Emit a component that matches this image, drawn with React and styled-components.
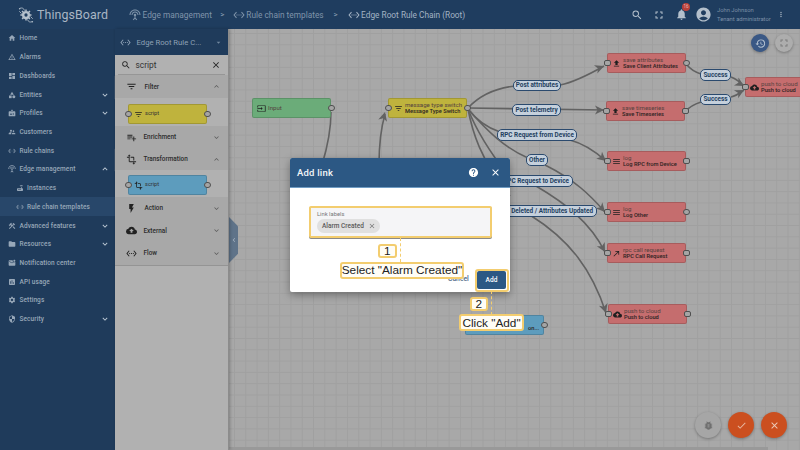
import React from "react";
import styled, { createGlobalStyle } from "styled-components";
import {
  MdHome, MdOutlineWarningAmber, MdDashboard, MdCategory, MdBadge, MdSupervisorAccount, MdSettingsEthernet,
  MdSettingsInputAntenna, MdRouter, MdConstruction, MdFolder, MdMarkEmailUnread, MdInsertChart, MdSettings,
  MdSecurity, MdExpandMore, MdExpandLess, MdSearch, MdFullscreen, MdNotifications, MdAccountCircle, MdMoreVert,
  MdArrowDropDown, MdClose, MdFilterList, MdPlaylistAdd, MdTransform, MdFlashOn, MdCloudUpload, MdInput,
  MdFileUpload, MdMenu, MdCallMade, MdBugReport, MdCheck, MdHistory, MdHelp, MdChevronLeft,
} from "react-icons/md";

const Global = createGlobalStyle`
  html, body { margin: 0; padding: 0; width: 800px; height: 450px; overflow: hidden; }
  body { font-family: Roboto, "Liberation Sans", sans-serif; }
  * { box-sizing: border-box; }
`;

const Page = styled.div`
  position: relative;
  width: 800px;
  height: 450px;
  overflow: hidden;
  display: flex;
  flex-direction: column;
  background: #1f3b5b;
`;

/* Header */
const Header = styled.header`
  height: 29px;
  flex: none;
  display: flex;
  align-items: center;
  background: #1f3d5f;
  color: #8ea1b5;
`;
const Brand = styled.div`
  width: 129px;
  flex: none;
  padding-left: 17px;
  display: flex;
  align-items: center;
  gap: 2px;
  color: #a9b6c4;
  font-size: 12.4px;
  letter-spacing: 0.1px;
`;
const Crumbs = styled.nav`
  display: flex;
  align-items: center;
  flex: 1;
  min-width: 0;
  font-size: 8.3px;
  white-space: nowrap;
`;
const Crumb = styled.span`
  display: flex;
  align-items: center;
  gap: 1.5px;
  color: ${(p) => (p.$current ? "#a3b3c4" : "#7f94aa")};
  svg { font-size: 12px; flex: none; }
`;
const Sep = styled.span`
  width: ${(p) => p.$w}px;
  text-align: center;
  font-size: 8px;
  color: #8ea1b5;
`;
const Tools = styled.div`
  width: 174px;
  flex: none;
  display: flex;
  align-items: center;
  padding-right: 15px;
  color: #b4c0cc;
`;
const ToolIcon = styled.span`
  position: relative;
  display: flex;
  flex: none;
  width: ${(p) => p.$w || 22}px;
  justify-content: center;
  font-size: ${(p) => p.$size || 12}px;
`;
const Badge = styled.i`
  position: absolute;
  top: -5px;
  left: 12px;
  width: 8px;
  height: 8px;
  border-radius: 50%;
  background: #b9403a;
  color: #e9b7b5;
  font: normal 4.5px/8px Roboto, sans-serif;
  text-align: center;
`;
const User = styled.div`
  display: flex;
  flex-direction: column;
  gap: 2px;
  width: 60px;
  margin-left: 3px;
  font-size: 5.8px;
  line-height: 7px;
  color: #7c90a6;
  white-space: nowrap;
`;

/* Body */
const Body = styled.div`
  flex: 1;
  display: flex;
  min-height: 0;
`;
const Sidebar = styled.aside`
  width: 114.5px;
  flex: none;
  background: #1f3b5b;
`;
const NavItem = styled.div`
  height: 18.72px;
  display: flex;
  align-items: center;
  padding-left: ${(p) => (p.$sub ? 15.5 : 7.5)}px;
  gap: ${(p) => (p.$sub ? 3.5 : 4)}px;
  background: ${(p) => (p.$active ? "#28476a" : "transparent")};
  color: #97a7b8;
  font-size: 6.5px;
  font-weight: 500;
  letter-spacing: 0.1px;
  white-space: nowrap;
  > svg:first-child { font-size: 8px; flex: none; }
`;
const NavChevron = styled.span`
  margin-left: auto;
  margin-right: 5px;
  display: flex;
  font-size: 10px;
  color: #c0ccd8;
`;

const Palette = styled.section`
  width: 114.5px;
  flex: none;
  display: flex;
  flex-direction: column;
  background: #b1b1b1;
  border-right: 1px solid #8c8c8c;
  box-shadow: 1px 0 3px rgba(0, 0, 0, 0.25);
  z-index: 1;
`;
const ChainSelect = styled.div`
  height: 26px;
  flex: none;
  display: flex;
  align-items: center;
  padding-left: 5px;
  gap: 6px;
  background: #1f3b5b;
  color: #8ea1b5;
  font-size: 7.7px;
  white-space: nowrap;
  > svg:first-child { font-size: 11px; flex: none; }
`;
const Caret = styled.span`
  margin-left: auto;
  margin-right: 5px;
  display: flex;
  font-size: 9px;
  color: #71879e;
`;
const SearchBox = styled.div`
  height: 20px;
  flex: none;
  margin: 0 3px;
  display: flex;
  align-items: center;
  padding: 0 4px 0 3px;
  gap: 5px;
  border-bottom: 1px solid #969696;
  color: #333;
  font-size: 8.4px;
  svg { font-size: 10px; flex: none; color: #222; }
`;
const Spacer = styled.span`
  margin-left: auto;
  display: flex;
`;
const Section = styled.div`
  height: ${(p) => p.$h}px;
  flex: none;
  display: flex;
  align-items: center;
  padding-left: 11px;
  gap: ${(p) => p.$gap || 5}px;
  background: #a8a8a8;
  color: #2c2c2c;
  font-size: 6.4px;
  font-weight: 500;
  box-shadow: ${(p) => (p.$open ? "0 1px 1px #999" : "none")};
  > svg:first-child { font-size: 11px; flex: none; color: #222; }
`;
const SectionChevron = styled.span`
  margin-left: auto;
  margin-right: 7px;
  display: flex;
  font-size: 9px;
  color: #5b5b5b;
`;
const SectionBody = styled.div`
  height: ${(p) => p.$h}px;
  flex: none;
  padding: ${(p) => p.$top}px 0 0 13.5px;
  background: #b1b1b1;
`;
const PaletteEnd = styled.div`
  height: 1px;
  flex: none;
  background: #949494;
`;

/* Nodes */
const colors = { red: "#c56d6e", yellow: "#bfb33d", blue: "#5d9cbd", green: "#6bac79" };
const NodeBox = styled.div`
  position: absolute;
  left: ${(p) => p.$x - 229}px;
  top: ${(p) => p.$y - 29}px;
  width: ${(p) => p.$w || 79}px;
  height: 20px;
  display: flex;
  align-items: center;
  padding-left: ${(p) => p.$pad || 4}px;
  gap: 2px;
  background: ${(p) => colors[p.$c]};
  border: 0.5px solid rgba(0, 0, 0, 0.15);
  border-radius: 2px;
  color: #333;
  font-size: 5.6px;
  line-height: 7.2px;
  white-space: nowrap;
  > svg { font-size: 9px; flex: none; color: #1f1f1f; }
`;
const NodeText = styled.div`
  display: flex;
  flex-direction: column;
  color: #55423f;
  font-size: 6.1px;
  b { font-weight: 500; font-size: 5.7px; color: #2b2222; }
`;
const Port = styled.i`
  position: absolute;
  top: 50%;
  ${(p) => (p.$in ? "left: -4px" : "right: -4.5px")};
  width: 6.5px;
  height: 6.5px;
  margin-top: -3.3px;
  border-radius: ${(p) => (p.$round ? "50%" : "2px")};
  background: #a5a5a5;
  border: 0.7px solid #4f4f4f;
`;
const PaletteItem = styled(NodeBox)`
  position: relative;
  left: 0;
  top: 0;
  padding-left: 5px;
`;
const Canvas = styled.main`
  position: relative;
  flex: 1;
  min-width: 0;
  background-color: #a8a8a8;
  background-image:
    linear-gradient(#a0a0a0 0.6px, transparent 0.6px),
    linear-gradient(90deg, #a0a0a0 0.6px, transparent 0.6px);
  background-size: 11.3px 11.3px;
  background-position: 5px 4px;
`;
const Wires = styled.svg`
  position: absolute;
  inset: 0;
`;
const EdgeLabel = styled.div`
  position: absolute;
  left: ${(p) => p.$x - 229}px;
  top: ${(p) => p.$y - 29}px;
  width: ${(p) => p.$w}px;
  height: 11.5px;
  display: flex;
  align-items: center;
  justify-content: ${(p) => (p.$end ? "flex-end" : "center")};
  padding-right: ${(p) => (p.$end ? 3 : 0)}px;
  background: #c5d0dc;
  border: 1px solid #2b4a6e;
  border-radius: 5px;
  color: #23405f;
  font-size: 6.4px;
  font-weight: 700;
  white-space: nowrap;
  overflow: hidden;
`;
const CollapseTab = styled.div`
  position: absolute;
  left: 0;
  top: 188px;
  width: 9px;
  height: 46px;
  display: flex;
  align-items: center;
  justify-content: center;
  color: #a9b6c4;
  font-size: 8px;
  background: #5f7389;
  clip-path: polygon(0 0, 100% 20%, 100% 80%, 0 100%);
`;
const Round = styled.div`
  position: absolute;
  left: ${(p) => p.$x - 229 - p.$d / 2}px;
  top: ${(p) => p.$y - 29 - p.$d / 2}px;
  width: ${(p) => p.$d}px;
  height: ${(p) => p.$d}px;
  display: flex;
  align-items: center;
  justify-content: center;
  border-radius: 50%;
  background: ${(p) => p.$bg};
  color: ${(p) => p.$fg};
  font-size: ${(p) => p.$icon}px;
  box-shadow: 0 1px 3px rgba(0, 0, 0, 0.3);
`;
const Scrollbar = styled.div`
  position: absolute;
  left: 0;
  bottom: 0;
  width: 539px;
  height: 3px;
  background: #999;
`;

/* Dialog */
const Dialog = styled.div`
  position: absolute;
  left: 290px;
  top: 158px;
  width: 220px;
  height: 134px;
  display: flex;
  flex-direction: column;
  background: #fff;
  border-radius: 2px;
  box-shadow: 0 3px 8px rgba(0, 0, 0, 0.35);
  z-index: 3;
`;
const DialogHead = styled.div`
  height: 30px;
  flex: none;
  display: flex;
  align-items: center;
  padding: 0 9px 0 7px;
  background: #2c5884;
  border-bottom: 1px solid #6f9cc4;
  border-radius: 2px 2px 0 0;
  color: #f2f5f8;
  font-size: 9.5px;
  font-weight: 500;
  letter-spacing: 0.2px;
`;
const HeadIcons = styled.div`
  margin-left: auto;
  display: flex;
  align-items: center;
  gap: 11px;
  color: #fff;
  font-size: 11px;
`;
const DialogBody = styled.div`
  flex: 1;
  padding: 18px 18px 0 19px;
`;
const Field = styled.div`
  height: 32px;
  padding: 3px 6px;
  background: #f5f5f7;
  border: 2px solid #f3cd6f;
  border-radius: 2px;
  box-shadow: 0 1px 0 #8a8a8a;
`;
const FieldLabel = styled.div`
  font-size: 5.8px;
  line-height: 7px;
  color: #777;
  margin-bottom: 1px;
`;
const Chip = styled.span`
  display: flex;
  width: fit-content;
  align-items: center;
  gap: 4px;
  height: 14px;
  padding: 0 4px 0 5px;
  border-radius: 7px;
  background: #e0e0e0;
  color: #5a5a5a;
  font-size: 6.5px;
  font-weight: 500;
  svg { font-size: 8px; color: #777; }
`;
const Cancel = styled.span`
  position: absolute;
  left: 158px;
  top: 117px;
  font-size: 6.8px;
  font-weight: 500;
  color: #4d6a88;
`;
const AddButton = styled.div`
  position: absolute;
  left: 187px;
  top: 113px;
  width: 29px;
  height: 18px;
  display: flex;
  align-items: center;
  justify-content: center;
  background: #2c5884;
  border-radius: 2px;
  color: #fff;
  font-size: 6.6px;
  font-weight: 500;
`;

/* Tour callouts */
const Highlight = styled.div`
  position: absolute;
  left: 475px;
  top: 269px;
  width: 34px;
  height: 23px;
  border: 2px solid #f3cd6f;
  border-radius: 3px;
  z-index: 4;
`;
const Step = styled.div`
  position: absolute;
  left: ${(p) => p.$x}px;
  top: ${(p) => p.$y}px;
  width: ${(p) => p.$w}px;
  height: ${(p) => p.$h}px;
  display: flex;
  align-items: center;
  justify-content: center;
  background: #fffdf6;
  border: 2px solid #f3cd6f;
  border-radius: 3px;
  color: #222;
  font-family: "Liberation Sans", Arial, sans-serif;
  font-size: 11.8px;
  white-space: nowrap;
  z-index: 5;
`;
const Leader = styled.div`
  position: absolute;
  left: ${(p) => p.$x}px;
  top: ${(p) => p.$y}px;
  height: ${(p) => p.$h}px;
  border-left: 1px dashed #f3cd6f;
  z-index: 4;
`;

const Logo = () => (
  <svg width="18" height="18" viewBox="0 0 24 24" fill="none" stroke="#b4c0cc">
    <path d="M4 3c3-1 5 0 6 3M20 21c-3 1-5 0-6-3M3 7l3 3M21 17l-3-3" strokeWidth="1.1" />
    <circle cx="12" cy="12" r="5.5" fill="#b4c0cc" stroke="none" />
    <path d="M12 4.5v15M4.5 12h15M6.7 6.7l10.6 10.6M17.3 6.7L6.7 17.3" strokeWidth="2" strokeDasharray="2.4 10" />
    <circle cx="12" cy="12" r="2.2" fill="#1f3d5f" stroke="none" />
    <circle cx="3.5" cy="3.5" r="1" fill="#b4c0cc" stroke="none" />
    <circle cx="20.5" cy="21" r="1" fill="#b4c0cc" stroke="none" />
  </svg>
);

const nav = [
  [MdHome, "Home"], [MdOutlineWarningAmber, "Alarms"], [MdDashboard, "Dashboards"], [MdCategory, "Entities", "d"],
  [MdBadge, "Profiles", "d"], [MdSupervisorAccount, "Customers"], [MdSettingsEthernet, "Rule chains"],
  [MdSettingsInputAntenna, "Edge management", "u"], [MdRouter, "Instances", null, true],
  [MdSettingsEthernet, "Rule chain templates", null, true, true], [MdConstruction, "Advanced features", "d"],
  [MdFolder, "Resources", "d"], [MdMarkEmailUnread, "Notification center"], [MdInsertChart, "API usage"],
  [MdSettings, "Settings"], [MdSecurity, "Security", "d"],
];

const nodes = [
  { x: 252, y: 98, c: "green", I: MdInput, a: "Input", outOnly: true },
  { x: 388, y: 98, c: "yellow", I: MdFilterList, a: "message type switch", b: "Message Type Switch", pad: 5, round: true },
  { x: 607, y: 53, c: "red", I: MdFileUpload, a: "save attributes", b: "Save Client Attributes", outRound: true },
  { x: 606, y: 101, c: "red", I: MdFileUpload, a: "save timeseries", b: "Save Timeseries" },
  { x: 745, y: 77, w: 60, c: "red", I: MdCloudUpload, a: "push to cloud", b: "Push to cloud" },
  { x: 607, y: 151, c: "red", I: MdMenu, a: "log", b: "Log RPC from Device" },
  { x: 607, y: 202, c: "red", I: MdMenu, a: "log", b: "Log Other", outRound: true },
  { x: 607, y: 243, c: "red", I: MdCallMade, a: "rpc call request", b: "RPC Call Request" },
  { x: 608, y: 304, c: "red", I: MdCloudUpload, a: "push to cloud", b: "Push to cloud" },
  { x: 465, y: 315, c: "blue", a: "\u00a0", b: "on...", pad: 62, outRound: true, noIn: true },
];

const labels = [
  { x: 513, y: 79.5, w: 48, t: "Post attributes" },
  { x: 512, y: 104, w: 49, t: "Post telemetry" },
  { x: 497, y: 129, w: 80, t: "RPC Request from Device" },
  { x: 526, y: 154, w: 22, t: "Other" },
  { x: 492, y: 175, w: 81, t: "RPC Request to Device", end: true },
  { x: 500, y: 205, w: 97, t: "Deleted / Attributes Updated", end: true },
  { x: 700, y: 69, w: 31, t: "Success" },
  { x: 700, y: 93.5, w: 31, t: "Success" },
];

const wires = [
  "M331 112C331 130 328 145 322 165",
  "M379 165C379 145 381 128 385 114",
  "M468 108C480 95 497 88 515 86",
  "M560 85C575 82 590 74 604 66",
  "M468 108L604 110",
  "M468 109C478 122 488 128 500 132",
  "M570 140C585 144 596 152 606 161",
  "M468 109C488 132 505 148 528 158",
  "M545 165C575 180 590 195 605 212",
  "M468 109C476 130 488 150 510 178",
  "M536 186C565 203 590 222 605 252",
  "M468 109C472 130 480 160 510 196",
  "M530 215C570 240 592 270 606 313",
  "M687 65C691 70 695 72 701 74",
  "M731 77C736 79 740 82 744 86",
  "M686 111C690 106 695 104 701 102",
  "M731 97C736 96 740 93 744 90",
];
const heads = [
  [385, 112, -75], [604, 66, -22], [604, 110, 0], [606, 161, 40], [605, 212, 48],
  [605, 252, 62], [606, 313, 72], [744, 86, 30], [744, 90, -28],
];

const Node = ({ n }) => (
  <NodeBox $x={n.x} $y={n.y} $w={n.w} $c={n.c} $pad={n.pad}>
    {n.I && <n.I />}
    <NodeText>
      <span>{n.a}</span>
      {n.b && <b>{n.b}</b>}
    </NodeText>
    {!n.outOnly && !n.noIn && <Port $in $round={n.round} />}
    {n.w ? null : <Port $round={n.round || n.outRound || n.outOnly} />}
  </NodeBox>
);

const PaletteNode = ({ c, I }) => (
  <PaletteItem $x={229} $y={29} $c={c}>
    <I />
    <span>script</span>
    <Port $in $round />
    <Port $round />
  </PaletteItem>
);

export default function App() {
  return (
    <Page>
      <Global />
      <Header>
        <Brand><Logo />ThingsBoard</Brand>
        <Crumbs>
          <Crumb><MdSettingsInputAntenna />Edge management</Crumb>
          <Sep $w={21}>&gt;</Sep>
          <Crumb><MdSettingsEthernet />Rule chain templates</Crumb>
          <Sep $w={24}>&gt;</Sep>
          <Crumb $current><MdSettingsEthernet />Edge Root Rule Chain (Root)</Crumb>
        </Crumbs>
        <Tools>
          <ToolIcon><MdSearch /></ToolIcon>
          <ToolIcon><MdFullscreen /></ToolIcon>
          <ToolIcon $size={13}><MdNotifications /><Badge>16</Badge></ToolIcon>
          <ToolIcon $size={17}><MdAccountCircle /></ToolIcon>
          <User><span>John Johnson</span><span>Tenant administrator</span></User>
          <ToolIcon $w={8} $size={11}><MdMoreVert /></ToolIcon>
        </Tools>
      </Header>
      <Body>
        <Sidebar>
          {nav.map(([I, t, chev, sub, active]) => (
            <NavItem key={t} $sub={sub} $active={active}>
              <I />
              {t}
              {chev && <NavChevron>{chev === "u" ? <MdExpandLess /> : <MdExpandMore />}</NavChevron>}
            </NavItem>
          ))}
        </Sidebar>
        <Palette>
          <ChainSelect>
            <MdSettingsEthernet />
            Edge Root Rule C...
            <Caret><MdArrowDropDown /></Caret>
          </ChainSelect>
          <SearchBox>
            <MdSearch />
            script
            <Spacer><MdClose /></Spacer>
          </SearchBox>
          <Section $h={23} $gap={8} $open>
            <MdFilterList />Filter
            <SectionChevron><MdExpandLess /></SectionChevron>
          </Section>
          <SectionBody $h={28} $top={6}><PaletteNode c="yellow" I={MdFilterList} /></SectionBody>
          <Section $h={22} $gap={7}>
            <MdPlaylistAdd />Enrichment
            <SectionChevron><MdExpandMore /></SectionChevron>
          </Section>
          <Section $h={22} $gap={7} $open>
            <MdTransform />Transformation
            <SectionChevron><MdExpandLess /></SectionChevron>
          </Section>
          <SectionBody $h={27} $top={5}><PaletteNode c="blue" I={MdTransform} /></SectionBody>
          <Section $h={22.5} $gap={8}>
            <MdFlashOn />Action
            <SectionChevron><MdExpandMore /></SectionChevron>
          </Section>
          <Section $h={22.5} $gap={7}>
            <MdCloudUpload />External
            <SectionChevron><MdExpandMore /></SectionChevron>
          </Section>
          <Section $h={22.5} $gap={7}>
            <MdSettingsEthernet />Flow
            <SectionChevron><MdExpandMore /></SectionChevron>
          </Section>
          <PaletteEnd />
        </Palette>
        <Canvas>
          <Wires width="571" height="421" viewBox="229 29 571 421">
            {wires.map((d) => (
              <path key={d} d={d} fill="none" stroke="#626262" strokeWidth="1.6" />
            ))}
            {heads.map(([x, y, r]) => (
              <path key={`${x}${y}`} d="M-9 -4.5L0 0L-9 4.5L-6.5 0Z" fill="#626262" transform={`translate(${x} ${y}) rotate(${r})`} />
            ))}
          </Wires>
          {nodes.map((n) => <Node key={`${n.x}${n.y}`} n={n} />)}
          {labels.map((l) => (
            <EdgeLabel key={`${l.x}${l.y}`} $x={l.x} $y={l.y} $w={l.w} $end={l.end}>{l.t}</EdgeLabel>
          ))}
          <CollapseTab><MdChevronLeft /></CollapseTab>
          <Round $x={760} $y={43} $d={18} $bg="#3a5885" $fg="#b6c3d2" $icon={11}><MdHistory /></Round>
          <Round $x={784} $y={43} $d={18} $bg="#adadad" $fg="#7c7c7c" $icon={12}><MdFullscreen /></Round>
          <Round $x={708} $y={425} $d={26} $bg="#a6a6a6" $fg="#6f6f6f" $icon={11}><MdBugReport /></Round>
          <Round $x={741} $y={425} $d={26} $bg="#cb4f1f" $fg="#e8b9a3" $icon={11}><MdCheck /></Round>
          <Round $x={774} $y={425} $d={26} $bg="#cb4f1f" $fg="#eccab8" $icon={11}><MdClose /></Round>
          <Scrollbar />
        </Canvas>
      </Body>

      <Dialog>
        <DialogHead>
          Add link
          <HeadIcons><MdHelp /><MdClose /></HeadIcons>
        </DialogHead>
        <DialogBody>
          <Field>
            <FieldLabel>Link labels</FieldLabel>
            <Chip>Alarm Created<MdClose /></Chip>
          </Field>
        </DialogBody>
        <Cancel>Cancel</Cancel>
        <AddButton>Add</AddButton>
      </Dialog>

      <Highlight />
      <Leader $x={400} $y={238} $h={24} />
      <Leader $x={491} $y={291} $h={24} />
      <Step $x={378} $y={244} $w={18.5} $h={14}>1</Step>
      <Step $x={340} $y={262} $w={124} $h={16.5}>Select "Alarm Created"</Step>
      <Step $x={470} $y={297} $w={17.5} $h={14}>2</Step>
      <Step $x={459} $y={314} $w={65} $h={17}>Click "Add"</Step>
    </Page>
  );
}
